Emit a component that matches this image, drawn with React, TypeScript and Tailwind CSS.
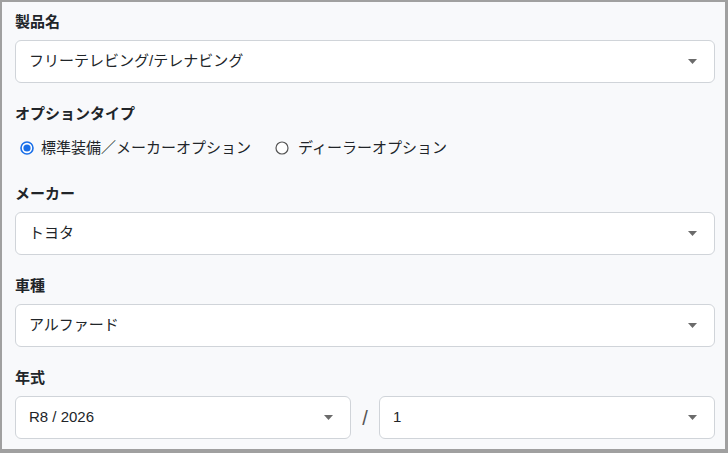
import React from "react";

const font = { fontFamily: '"Liberation Sans", "Noto Sans CJK JP", sans-serif' };

function Arrow() {
  return (
    <svg width="9" height="5" viewBox="0 0 9 5" className="shrink-0">
      <path d="M0 0 H9 L4.5 5 Z" fill="#6b6b6b" />
    </svg>
  );
}

function Select({ value, className = "" }: { value: string; className?: string }) {
  return (
    <div
      className={`h-[43px] rounded-[6px] border border-[#d0d4d9] bg-white pl-[13px] pr-[17px] flex items-center justify-between text-[15px] text-[#212529] ${className}`}
    >
      <span>{value}</span>
      <Arrow />
    </div>
  );
}

function Label({ children, className = "" }: { children: React.ReactNode; className?: string }) {
  return (
    <div className={`h-[20px] leading-[20px] text-[15px] font-bold text-[#212529] mb-[8px] ${className}`}>
      {children}
    </div>
  );
}

function Radio({ checked }: { checked: boolean }) {
  return checked ? (
    <svg width="14" height="14" viewBox="0 0 14 14" className="shrink-0">
      <circle cx="7" cy="7" r="6" fill="white" stroke="#1a6fe8" strokeWidth="1.6" />
      <circle cx="7" cy="7" r="3.6" fill="#1a6fe8" />
    </svg>
  ) : (
    <svg width="14" height="14" viewBox="0 0 14 14" className="shrink-0">
      <circle cx="7" cy="7" r="6" fill="white" stroke="#555" strokeWidth="1.2" />
    </svg>
  );
}

export default function App() {
  return (
    <div
      style={font}
      className="w-[728px] h-[453px] overflow-hidden bg-[#f8f9fb] border-[#a0a0a0] border-l-2 border-t-2 border-r-[3px] border-b-[4px] pl-[13px] pr-[10px] pt-[10px]"
    >
      <Label>製品名</Label>
      <Select value="フリーテレビング/テレナビング" />

      <Label className="mt-[21px]">オプションタイプ</Label>
      <div className="mt-[14px] h-[20px] flex items-center text-[15px] text-[#212529]">
        <div className="flex items-center ml-[5px]">
          <Radio checked />
          <span className="ml-[7px]">標準装備／メーカーオプション</span>
        </div>
        <div className="flex items-center ml-[24px]">
          <Radio checked={false} />
          <span className="ml-[9px]">ディーラーオプション</span>
        </div>
      </div>

      <Label className="mt-[26px]">メーカー</Label>
      <Select value="トヨタ" />

      <Label className="mt-[21px]">車種</Label>
      <Select value="アルファード" />

      <Label className="mt-[21px]">年式</Label>
      <div className="flex items-center">
        <Select value="R8 / 2026" className="w-[336px]" />
        <div className="w-[28px] text-center text-[20px] text-[#555]">/</div>
        <Select value="1" className="w-[336px]" />
      </div>
    </div>
  );
}
